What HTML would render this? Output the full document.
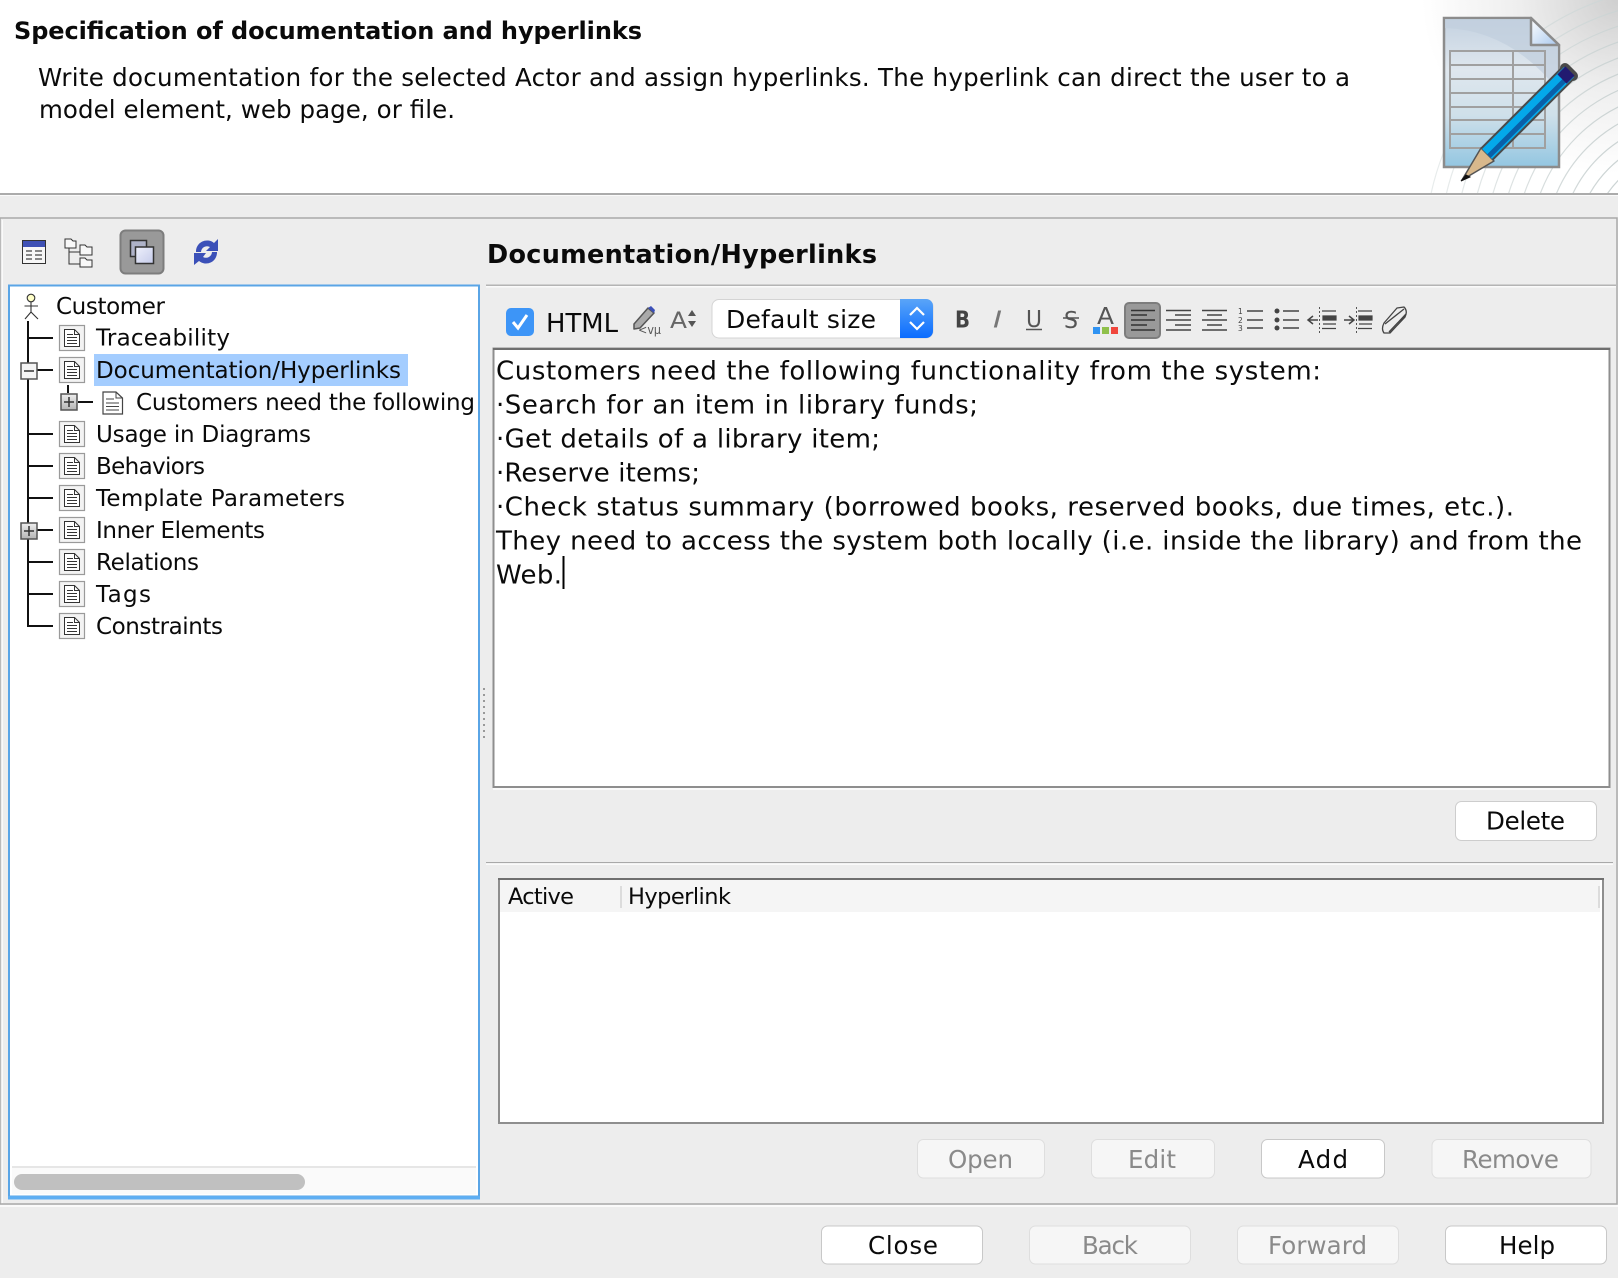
<!DOCTYPE html>
<html><head><meta charset="utf-8"><style>
html,body{margin:0;padding:0;background:#ededed;width:1618px;height:1278px;overflow:hidden}
svg{display:block}
text{font-family:"DejaVu Sans","Liberation Sans",sans-serif;fill:#0a0a0a}
.t{font-size:23px}.e{font-size:26px}.d{font-size:24.5px}.b{font-size:24.5px}.g{fill:#8a8a8a}
</style></head><body>
<svg width="1618" height="1278" viewBox="0 0 1618 1278" xmlns="http://www.w3.org/2000/svg">
<defs>
<radialGradient id="sw" cx="1" cy="0" r="0.9"><stop offset="0" stop-color="#cfcfcf"/><stop offset="0.5" stop-color="#eeeeee"/><stop offset="1" stop-color="#fff"/></radialGradient>
<linearGradient id="page" x1="0" y1="0" x2="0" y2="1"><stop offset="0" stop-color="#c3d1e0"/><stop offset="0.35" stop-color="#dfe7ee"/><stop offset="0.65" stop-color="#cfe0ea"/><stop offset="1" stop-color="#93c6e1"/></linearGradient>
<linearGradient id="fold" x1="0" y1="0" x2="1" y2="1"><stop offset="0" stop-color="#fff"/><stop offset="1" stop-color="#a9c8ee"/></linearGradient>
<linearGradient id="blue" x1="0" y1="0" x2="0" y2="1"><stop offset="0" stop-color="#5aa5f8"/><stop offset="1" stop-color="#0a6cff"/></linearGradient>
<linearGradient id="plus" x1="0" y1="0" x2="0" y2="1"><stop offset="0" stop-color="#eee"/><stop offset="1" stop-color="#b4b4b4"/></linearGradient>
<linearGradient id="sq" x1="0" y1="0" x2="1" y2="1"><stop offset="0" stop-color="#eef0fb"/><stop offset="1" stop-color="#c5cbea"/></linearGradient>
<linearGradient id="arc" x1="1440" y1="0" x2="1618" y2="0" gradientUnits="userSpaceOnUse"><stop offset="0" stop-color="#e8ecec"/><stop offset="1" stop-color="#cbd3d3"/></linearGradient>
<clipPath id="hc"><rect x="1430" y="0" width="188" height="193"/></clipPath>
<g id="doc">
<rect x=".5" y="-12.5" width="25" height="25" fill="#f3f3f3" stroke="#9a9a9a" stroke-width="1.2"/>
<path d="M5.5-8.5H15.5L20.5-3.5V8.5H5.5Z" fill="#fff" stroke="#333" stroke-width="1"/>
<path d="M15.5-8.5V-3.5H20.5M8-3.5H14M8-.5H18M8 2.5H18M8 5.5H18" fill="none" stroke="#333" stroke-width="1"/>
</g>
<g id="row"><path d="M28 0H53" stroke="#111" stroke-width="2"/></g>
</defs>

<!-- header -->
<rect x="0" y="0" width="1618" height="194" fill="#fff"/>
<rect x="1400" y="0" width="218" height="193" fill="url(#sw)"/>
<g clip-path="url(#hc)" fill="none" stroke="url(#arc)" stroke-width="1.2">
<circle cx="1690" cy="250" r="70"/><circle cx="1690" cy="250" r="85"/><circle cx="1690" cy="250" r="100"/><circle cx="1690" cy="250" r="115"/><circle cx="1690" cy="250" r="130"/><circle cx="1690" cy="250" r="145"/><circle cx="1690" cy="250" r="160"/><circle cx="1690" cy="250" r="175"/><circle cx="1690" cy="250" r="190"/><circle cx="1690" cy="250" r="205"/><circle cx="1690" cy="250" r="220"/><circle cx="1690" cy="250" r="235"/><circle cx="1690" cy="250" r="250"/><circle cx="1690" cy="250" r="265"/>
</g>
<rect x="0" y="193" width="1618" height="2" fill="#ababab"/>
<rect x="0" y="195" width="1618" height="1" fill="#fafafa"/>
<text x="14" y="39" font-size="24" font-weight="bold" textLength="628" lengthAdjust="spacing">Specification of documentation and hyperlinks</text>
<text x="38" y="86" class="d" textLength="1312" lengthAdjust="spacing">Write documentation for the selected Actor and assign hyperlinks. The hyperlink can direct the user to a</text>
<text x="39" y="118" class="d" textLength="416" lengthAdjust="spacing">model element, web page, or file.</text>

<!-- document image -->
<path d="M1444 18H1531L1559 45V167H1444Z" fill="url(#page)" stroke="#8c8c8c" stroke-width="2.5"/>
<path d="M1445 19H1530L1558 46V90Q1510 30 1445 28Z" fill="#c2cfdd" opacity=".75"/>
<path d="M1531 18V45H1559Z" fill="url(#fold)" stroke="#8c8c8c" stroke-width="2.5" stroke-linejoin="round"/>
<path d="M1450 51H1545V148H1450ZM1450 65H1545M1450 79H1545M1450 93H1545M1450 107H1545M1450 120H1545M1450 134H1545M1513 51V148" fill="none" stroke="#a0a0a0" stroke-width="2"/>
<path d="M1481 148L1494 161L1462 180Z" fill="#d8b88c" stroke="#555" stroke-width="1.5" stroke-linejoin="round"/>
<path d="M1466 175L1461 181L1470 177Z" fill="#111" stroke="#111"/>
<path d="M1487 154L1569 72" stroke="#4a4a4a" stroke-width="18"/>
<path d="M1565 68L1573 76" stroke="#4a4a4a" stroke-width="10" stroke-linecap="round"/>
<path d="M1487 154L1569 72" stroke="#04a8ea" stroke-width="14"/>
<path d="M1489 156L1570 75" stroke="#0a5fa8" stroke-width="5"/>
<path d="M1562 79L1570 71" stroke="#221a70" stroke-width="13"/>

<!-- main panel -->
<rect x="0" y="218" width="1617" height="986" fill="none" stroke="#a9a9a9" stroke-width="1.5"/>
<rect x="2" y="220" width="1" height="983" fill="#fafafa"/>
<rect x="0" y="1205" width="1618" height="2" fill="#fafafa"/>

<!-- toolbar left -->
<rect x="22.5" y="240.5" width="23" height="23" fill="#f7f7f7" stroke="#333"/>
<rect x="23" y="241" width="22" height="6" fill="#3f51b5"/>
<path d="M26 251H32M35 251H42M26 255H32M35 255H42M26 259H32M35 259H42" stroke="#444" stroke-width="1.2"/>
<g fill="#f8f8f8" stroke="#333" stroke-width="1">
<path d="M69 248V264H80M69 252H80" fill="none"/>
<path d="M65 239H71L73 241H76V248H65Z"/>
<path d="M80 245H85L87 247H92V255H80Z"/>
<path d="M80 258H85L87 260H92V267H80Z"/>
</g>
<rect x="120.5" y="230.5" width="43" height="43" rx="5" fill="#999" stroke="#7d7d7d" stroke-width="2"/>
<rect x="130.5" y="240.5" width="16" height="16" fill="#aeb2c8" stroke="#333" stroke-width="1.5"/>
<rect x="135.5" y="247" width="18" height="16.5" fill="url(#sq)" stroke="#333" stroke-width="1.5"/>
<path d="M196 252A11 11 0 0 1 214 243L218 239V251H206L210 247A6 6 0 0 0 201 252Z" fill="#3b50b8"/>
<path d="M217 252A11 11 0 0 1 199 261L194 265V253H206L203 257A6 6 0 0 0 212 252Z" fill="#3b50b8"/>

<!-- tree -->
<rect x="9" y="285.5" width="470" height="911" fill="#fff" stroke="#5aa5e6" stroke-width="2"/>
<rect x="8" y="1196" width="472" height="3.5" fill="#5eaef2"/>
<rect x="12" y="1166" width="464" height="2" fill="#e6e6e6"/>
<rect x="12" y="1168" width="464" height="26" fill="#fafafa"/>
<rect x="14" y="1174" width="291" height="16" rx="8" fill="#c0c0c0"/>
<circle cx="31" cy="298" r="3.8" fill="#ffffc8" stroke="#333" stroke-width="1.1"/>
<path d="M31 302V312M24.5 306H38M31 312L25 319M31 312L38 319" stroke="#333" stroke-width="1.1" fill="none"/>
<path d="M28 321V626H53" stroke="#111" stroke-width="2" fill="none"/>
<use href="#row" y="338"/><use href="#row" y="370"/><use href="#row" y="434"/><use href="#row" y="466"/><use href="#row" y="498"/><use href="#row" y="530"/><use href="#row" y="562"/><use href="#row" y="594"/>
<use href="#doc" x="59" y="338"/><use href="#doc" x="59" y="370"/><use href="#doc" x="59" y="434"/><use href="#doc" x="59" y="466"/><use href="#doc" x="59" y="498"/><use href="#doc" x="59" y="530"/><use href="#doc" x="59" y="562"/><use href="#doc" x="59" y="594"/><use href="#doc" x="59" y="626"/>
<rect x="21" y="363" width="16" height="16" fill="#f4f4f4" stroke="#555" stroke-width="1.5"/>
<path d="M24 371H34" stroke="#333" stroke-width="1.5"/>
<path d="M68 385V393M78 402H93" stroke="#111" stroke-width="2"/>
<rect x="61" y="394" width="16" height="16" fill="url(#plus)" stroke="#555" stroke-width="1.5"/>
<path d="M64 402H74M69 397V407" stroke="#333" stroke-width="1.5"/>
<path d="M103 392H116L122.5 398V414H103Z" fill="#fff" stroke="#444" stroke-width="1.2"/>
<path d="M116 392V398H122.5M106 399H114M106 403H119M106 406.5H119M106 410H119" fill="none" stroke="#444" stroke-width="1"/>
<rect x="21" y="523" width="16" height="16" fill="url(#plus)" stroke="#555" stroke-width="1.5"/>
<path d="M24 531H34M29 526V536" stroke="#333" stroke-width="1.5"/>
<rect x="94" y="354" width="314" height="32" fill="#a4cdff"/>
<text x="56" y="314" class="t" textLength="109" lengthAdjust="spacing">Customer</text>
<text x="96" y="345.5" class="t" textLength="134" lengthAdjust="spacing">Traceability</text>
<text x="96" y="378" class="t" textLength="305" lengthAdjust="spacing">Documentation/Hyperlinks</text>
<text x="136" y="410" class="t" textLength="339" lengthAdjust="spacing">Customers need the following</text>
<text x="96" y="442" class="t" textLength="215" lengthAdjust="spacing">Usage in Diagrams</text>
<text x="96" y="474" class="t" textLength="109" lengthAdjust="spacing">Behaviors</text>
<text x="96" y="506" class="t" textLength="249" lengthAdjust="spacing">Template Parameters</text>
<text x="96" y="538" class="t" textLength="169" lengthAdjust="spacing">Inner Elements</text>
<text x="96" y="570" class="t" textLength="103" lengthAdjust="spacing">Relations</text>
<text x="96" y="602" class="t" textLength="55" lengthAdjust="spacing">Tags</text>
<text x="96" y="634" class="t" textLength="127" lengthAdjust="spacing">Constraints</text>

<!-- splitter dots -->
<path d="M484 688V740" stroke="#999" stroke-width="2" stroke-dasharray="2 4"/>

<!-- right title -->
<text x="487" y="263" font-size="25.5" font-weight="bold" textLength="390" lengthAdjust="spacing">Documentation/Hyperlinks</text>
<rect x="486" y="284.5" width="1130" height="1.5" fill="#b4b4b4"/>
<rect x="486" y="286" width="1130" height="1.5" fill="#fafafa"/>

<!-- format toolbar -->
<rect x="506" y="308" width="28" height="28" rx="5" fill="#3d95f7"/>
<path d="M513 322L518 328L527 315" fill="none" stroke="#fff" stroke-width="3"/>
<text x="546" y="332" font-size="26" textLength="72" lengthAdjust="spacingAndGlyphs">HTML</text>
<path d="M634 324L648 308L654 313L640 328L634 329Z" fill="#aaa" stroke="#555" stroke-width="1.5" stroke-linejoin="round"/>
<path d="M648 308L651 306L655 310L654 313Z" fill="#3b50b8"/>
<text x="638" y="334" font-size="12" style="fill:#555" textLength="23" lengthAdjust="spacingAndGlyphs">&lt;vμ</text>
<text x="670" y="328" font-size="22" style="fill:#666" textLength="17" lengthAdjust="spacingAndGlyphs">A</text>
<path d="M688 316L692 310L696 316ZM688 321H696L692 327Z" fill="#555"/>
<rect x="712" y="299.5" width="221" height="38.5" rx="7" fill="#fff" stroke="#d4d4d4"/>
<path d="M900 299H926A7 7 0 0 1 933 306V331A7 7 0 0 1 926 338H900Z" fill="url(#blue)"/>
<path d="M910 315L917 308L924 315M910 322L917 329L924 322" fill="none" stroke="#fff" stroke-width="2.2"/>
<text x="726" y="328" font-size="25" textLength="150" lengthAdjust="spacing">Default size</text>
<text x="955" y="327.5" font-size="23" font-weight="bold" style="fill:#444" textLength="15" lengthAdjust="spacingAndGlyphs">B</text>
<text x="993" y="327.5" font-size="23" font-style="italic" style="fill:#777" textLength="9" lengthAdjust="spacingAndGlyphs">I</text>
<text x="1026" y="327" font-size="23" style="fill:#555" textLength="16" lengthAdjust="spacingAndGlyphs">U</text>
<path d="M1026 329.5H1042" stroke="#555" stroke-width="1.5"/>
<text x="1064" y="328" font-size="23" style="fill:#555" textLength="14" lengthAdjust="spacingAndGlyphs">S</text>
<path d="M1063 318H1079" stroke="#555" stroke-width="1.5"/>
<text x="1097" y="324" font-size="23" style="fill:#555" textLength="17" lengthAdjust="spacingAndGlyphs">A</text>
<rect x="1093" y="327" width="7" height="7" fill="#2f93f2"/><rect x="1102" y="327" width="7" height="7" fill="#8fc04a"/><rect x="1111" y="327" width="7" height="7" fill="#f0463c"/>
<rect x="1125" y="303" width="35" height="35" rx="4" fill="#999" stroke="#7d7d7d" stroke-width="2"/>
<path d="M1131 310.5H1155M1131 315H1147M1131 320H1155M1131 325H1147M1131 330H1155" stroke="#333" stroke-width="1.4"/>
<path d="M1166 310.5H1191M1175 315H1191M1166 320H1191M1175 325H1191M1166 330H1191" stroke="#444" stroke-width="1.4"/>
<path d="M1202 310.5H1227M1207 315H1222M1202 320H1227M1207 325H1222M1202 330H1227" stroke="#444" stroke-width="1.4"/>
<path d="M1247 311H1263M1247 320H1263M1247 328H1263" stroke="#444" stroke-width="1.5"/>
<text x="1238" y="314" font-size="7.5" style="fill:#444">1</text><text x="1238" y="323" font-size="7.5" style="fill:#444">2</text><text x="1238" y="331" font-size="7.5" style="fill:#444">3</text>
<circle cx="1277" cy="311" r="2.5" fill="#444"/><circle cx="1277" cy="320" r="2.5" fill="#444"/><circle cx="1277" cy="328" r="2.5" fill="#444"/>
<path d="M1283 311H1299M1283 320H1299M1283 328H1299" stroke="#444" stroke-width="1.5"/>
<path d="M1308 320H1318M1313 316L1308 320L1313 324" fill="none" stroke="#444" stroke-width="1.5"/>
<path d="M1322 311H1336M1322 328.5H1336" stroke="#444" stroke-width="1.3"/>
<path d="M1323 316H1336V320H1323ZM1323 324H1336" fill="#444" stroke="#444" stroke-width="1.2"/>
<path d="M1319.500 307V333" stroke="#555" stroke-width="1" stroke-dasharray="2 2"/>
<path d="M1344 320H1354M1349 316L1354 320L1349 324" fill="none" stroke="#444" stroke-width="1.500"/>
<path d="M1358 311H1372M1358 328.500H1372" stroke="#444" stroke-width="1.300"/>
<path d="M1359 316H1372V320H1359ZM1359 324H1372" fill="#444" stroke="#444" stroke-width="1.200"/>
<path d="M1356.500 307V333" stroke="#555" stroke-width="1" stroke-dasharray="2 2"/>
<path d="M1397 308L1404 307Q1408 311 1405 317L1390 333L1384 333Q1381 329 1384 323ZM1385 324L1404 309M1389 332L1406 314" fill="none" stroke="#444" stroke-width="1.300" stroke-linejoin="round"/>

<!-- editor -->
<rect x="493.5" y="348.5" width="1116" height="438.5" fill="#fff" stroke="#8e8e8e" stroke-width="2"/>
<rect x="493" y="348" width="1117" height="2" fill="#6f6f6f"/>
<rect x="493" y="788" width="1117" height="2" fill="#fafafa"/>
<text x="496" y="379.5" class="e" textLength="825" lengthAdjust="spacing">Customers need the following functionality from the system:</text>
<text x="496" y="413.5" class="e" textLength="482" lengthAdjust="spacing">·Search for an item in library funds;</text>
<text x="496" y="447.5" class="e" textLength="384" lengthAdjust="spacing">·Get details of a library item;</text>
<text x="496" y="481.5" class="e" textLength="204" lengthAdjust="spacing">·Reserve items;</text>
<text x="496" y="515.5" class="e" textLength="1018" lengthAdjust="spacing">·Check status summary (borrowed books, reserved books, due times, etc.).</text>
<text x="496" y="549.5" class="e" textLength="1086" lengthAdjust="spacing">They need to access the system both locally (i.e. inside the library) and from the</text>
<text x="496" y="583.5" class="e" textLength="66" lengthAdjust="spacing">Web.</text>
<rect x="562.5" y="556" width="2" height="33" fill="#000"/>

<!-- delete -->
<rect x="1455.5" y="801.5" width="141" height="39" rx="6" fill="#fff" stroke="#cdcdcd"/>
<text x="1486" y="829.5" class="b" textLength="79" lengthAdjust="spacing">Delete</text>

<rect x="486" y="862" width="1127" height="1.2" fill="#a9a9a9"/>
<rect x="486" y="863.2" width="1127" height="1.8" fill="#fafafa"/>

<!-- table -->
<rect x="499" y="879" width="1104" height="244" fill="#fff" stroke="#8e8e8e" stroke-width="2"/>
<rect x="498" y="878" width="1106" height="2" fill="#6f6f6f"/>
<rect x="500" y="880" width="1100" height="32" fill="#f5f5f5"/>
<rect x="620" y="886" width="2" height="22" fill="#dcdcdc"/>
<rect x="1598" y="886" width="2" height="22" fill="#dcdcdc"/>
<text x="508" y="904" font-size="22.5" textLength="66" lengthAdjust="spacing">Active</text>
<text x="628" y="904" font-size="22.5" textLength="103" lengthAdjust="spacing">Hyperlink</text>

<!-- buttons -->
<g fill="#f6f6f6" stroke="#dedede">
<rect x="917.5" y="1139.5" width="127" height="38.5" rx="6"/>
<rect x="1091.5" y="1139.5" width="123" height="38.5" rx="6"/>
<rect x="1432" y="1139.5" width="159" height="38.5" rx="6"/>
<rect x="1029.5" y="1226" width="161" height="38" rx="6"/>
<rect x="1237.5" y="1226" width="161" height="38" rx="6"/>
</g>
<g fill="#fff" stroke="#c8c8c8">
<rect x="1261.5" y="1139.5" width="123" height="38.5" rx="6"/>
<rect x="821.5" y="1226" width="161" height="38" rx="6"/>
<rect x="1445.5" y="1226" width="161" height="38" rx="6"/>
</g>
<text x="948" y="1168" class="b g" textLength="65" lengthAdjust="spacing">Open</text>
<text x="1128" y="1168" class="b g" textLength="48" lengthAdjust="spacing">Edit</text>
<text x="1298" y="1168" class="b" textLength="50" lengthAdjust="spacing">Add</text>
<text x="1462" y="1168" class="b g" textLength="97" lengthAdjust="spacing">Remove</text>
<text x="868" y="1254" class="b" textLength="70" lengthAdjust="spacing">Close</text>
<text x="1082" y="1254" class="b g" textLength="56" lengthAdjust="spacing">Back</text>
<text x="1268" y="1254" class="b g" textLength="99" lengthAdjust="spacing">Forward</text>
<text x="1499" y="1254" class="b" textLength="56" lengthAdjust="spacing">Help</text>
</svg>
</body></html>
